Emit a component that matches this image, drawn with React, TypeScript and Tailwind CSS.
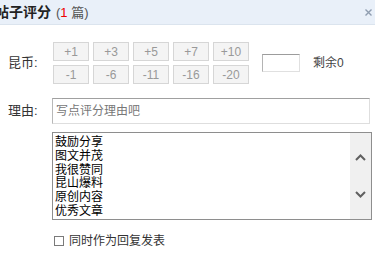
import React from 'react';

const plus = ['+1', '+3', '+5', '+7', '+10'];
const minus = ['-1', '-6', '-11', '-16', '-20'];
const reasons = ['鼓励分享', '图文并茂', '我很赞同', '昆山爆料', '原创内容', '优秀文章'];

function Chevron({ up }: { up?: boolean }) {
  return (
    <svg width="11" height="7" viewBox="0 0 11 7" className="block">
      <path
        d={up ? 'M1 6 L5.5 1.5 L10 6' : 'M1 1 L5.5 5.5 L10 1'}
        fill="none"
        stroke="#606060"
        strokeWidth="2"
      />
    </svg>
  );
}

export default function App() {
  return (
    <div
      className="w-[375px] h-[260px] bg-white overflow-hidden text-[#333]"
      style={{ fontFamily: '"Liberation Sans", "Noto Sans CJK SC", sans-serif' }}
    >
      {/* title bar, title runs off the left edge like the original dialog */}
      <div className="h-[25px] bg-[#e9f0f9] border-b border-[#dbe4ee] flex items-center justify-between pr-[2px]">
        <div className="ml-[-5px] flex items-center leading-none">
          <span className="text-[14px] font-bold text-[#222]">帖子评分</span>
          <span className="text-[13px] text-[#555] ml-[5px]">
            (<span className="text-[#e00]">1</span> 篇)
          </span>
        </div>
        <svg width="7" height="7" viewBox="0 0 7 7" className="mr-[1px]">
          <path d="M0.5 0.5 L6.5 6.5 M6.5 0.5 L0.5 6.5" stroke="#8f9db0" strokeWidth="1.4" />
        </svg>
      </div>

      <div className="pl-[8px]">
        {/* coins */}
        <div className="flex items-center mt-[17px]">
          <div className="w-[45px] text-[13px] leading-[14px]">昆币:</div>
          <div className="grid grid-cols-5 gap-[4px]">
            {[...plus, ...minus].map((v) => (
              <div
                key={v}
                className="w-[36px] h-[19px] bg-[#f4f4f4] border border-[#d6d6d6] flex items-center justify-center text-[12px] text-[#999] leading-none"
              >
                {v}
              </div>
            ))}
          </div>
          <div className="ml-[13px] w-[38px] h-[18px] border border-t-[#9c9c9c] border-l-[#b4b4b4] border-r-[#e0e0e0] border-b-[#e0e0e0] bg-white" />
          <div className="ml-[13px] text-[12px] leading-[14px] text-[#444]">剩余0</div>
        </div>

        {/* reason */}
        <div className="flex items-center mt-[14px]">
          <div className="w-[44px] text-[13px] leading-[14px]">理由:</div>
          <div className="w-[318px] h-[26px] border border-t-[#a0a0a0] border-l-[#b8b8b8] border-r-[#dedede] border-b-[#dedede] flex items-center pl-[3px] text-[12px] text-[#777]">
            写点评分理由吧
          </div>
        </div>

        {/* reason list */}
        <div className="ml-[44px] mt-[8px] w-[320px] h-[88px] border border-[#8e8e8e] flex">
          <div className="flex-1 pl-[2px] pt-[3px] text-[12px] leading-[13.8px] text-black">
            {reasons.map((r) => (
              <div key={r}>{r}</div>
            ))}
          </div>
          <div className="w-[21px] bg-[#f0f0f0] flex flex-col items-center justify-center gap-[30px]">
            <Chevron up />
            <Chevron />
          </div>
        </div>

        {/* checkbox */}
        <div className="ml-[46px] mt-[14px] flex items-center gap-[5px]">
          <div className="w-[10px] h-[10px] border border-[#7a7a7a] bg-white" />
          <span className="text-[12px] leading-[14px] text-[#333]">同时作为回复发表</span>
        </div>
      </div>
    </div>
  );
}
